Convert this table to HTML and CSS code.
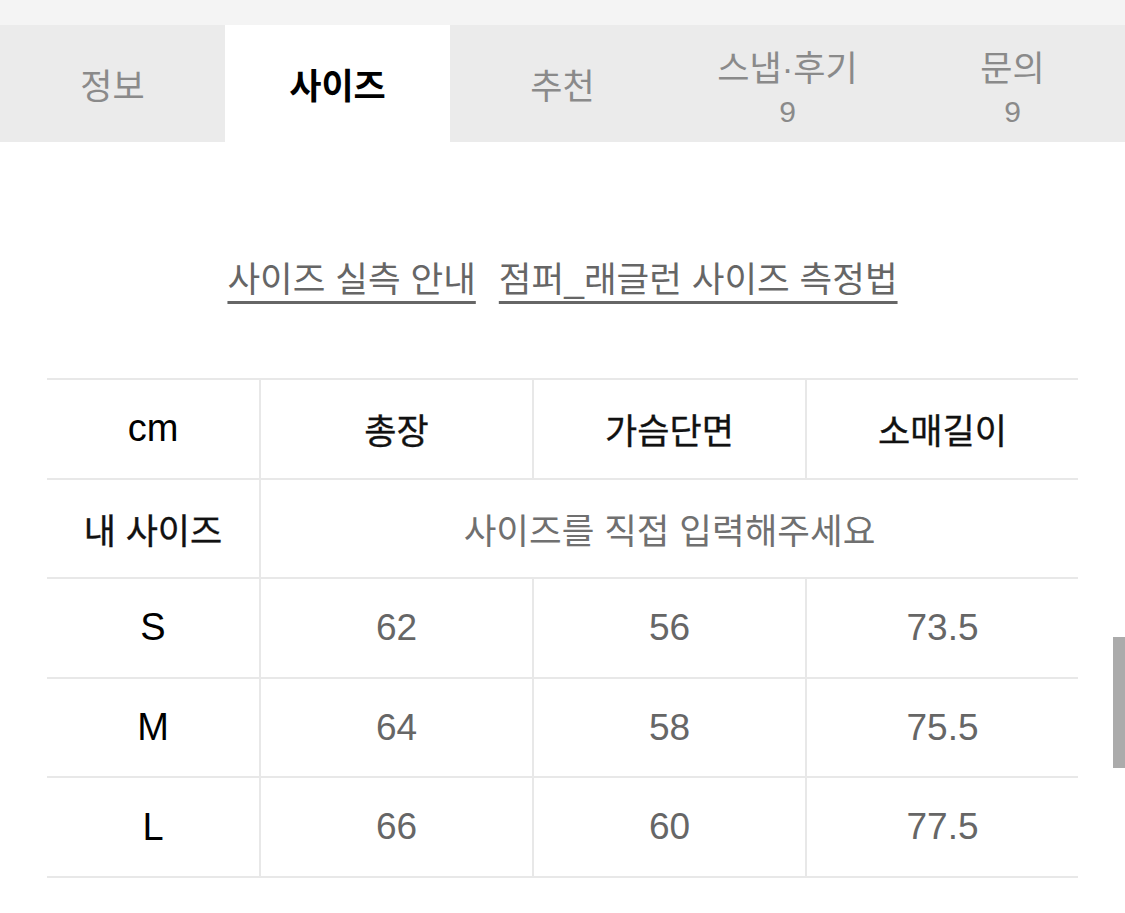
FILE: index.html
```html
<!DOCTYPE html>
<html lang="ko">
<head>
<meta charset="utf-8">
<title>사이즈</title>
<link rel="stylesheet" href="styles.css">
</head>
<body>
<div class="topstrip"></div>
<nav class="tabs">
  <div class="tab"><span class="tab-label">정보</span></div>
  <div class="tab active"><span class="tab-label">사이즈</span></div>
  <div class="tab"><span class="tab-label">추천</span></div>
  <div class="tab has-count"><span class="tab-label">스냅·후기</span><span class="tab-count">9</span></div>
  <div class="tab has-count"><span class="tab-label">문의</span><span class="tab-count">9</span></div>
</nav>
<section class="guide">
  <a class="guide-link">사이즈 실측 안내</a>
  <a class="guide-link">점퍼_래글런 사이즈 측정법</a>
</section>
<table class="size-table">
  <colgroup>
    <col class="c-first"><col class="c-mid"><col class="c-mid"><col class="c-last">
  </colgroup>
  <tr class="head">
    <td class="lat">cm</td>
    <td class="ko">총장</td>
    <td class="ko">가슴단면</td>
    <td class="ko">소매길이</td>
  </tr>
  <tr class="mine">
    <td class="ko">내 사이즈</td>
    <td colspan="3" class="hint">사이즈를 직접 입력해주세요</td>
  </tr>
  <tr>
    <td class="lat">S</td><td class="val">62</td><td class="val">56</td><td class="val">73.5</td>
  </tr>
  <tr>
    <td class="lat">M</td><td class="val">64</td><td class="val">58</td><td class="val">75.5</td>
  </tr>
  <tr>
    <td class="lat">L</td><td class="val">66</td><td class="val">60</td><td class="val">77.5</td>
  </tr>
</table>
<div class="scrollbar"></div>
</body>
</html>
```

FILE: styles.css
```css
html, body {
  margin: 0;
  padding: 0;
  background: #ffffff;
}
body {
  font-family: "Liberation Sans", "Noto Sans CJK KR", sans-serif;
  color: #000;
  width: 1125px;
  height: 913px;
  overflow: hidden;
  position: relative;
}
.topstrip {
  height: 25px;
  background: #f4f4f4;
}
.tabs {
  display: flex;
  height: 117px;
  background: #ebebeb;
}
.tab {
  flex: 1 1 0;
  display: flex;
  flex-direction: column;
  align-items: center;
  justify-content: center;
  padding-top: 6px;
  color: #8a8a8a;
}
.tab.active {
  background: #ffffff;
  color: #000;
  font-weight: 700;
}
.tab-label {
  font-size: 35px;
  line-height: 44px;
}
.tab.has-count {
  padding-top: 12px;
}
.tab-count {
  font-size: 30px;
  line-height: 42px;
}
.guide {
  padding-top: 113px;
  display: flex;
  justify-content: center;
  gap: 23px;
  line-height: 50px;
}
.guide-link {
  font-size: 35.5px;
  color: #666;
  text-decoration: underline;
  text-decoration-thickness: 3px;
  text-underline-offset: 9px;
  text-decoration-color: #666;
}
.size-table {
  margin: 73px 0 0 47px;
  width: 1031px;
  border-collapse: collapse;
  table-layout: fixed;
}
.c-first { width: 213px; }
.c-mid { width: 273px; }
.c-last { width: 272px; }
.size-table td {
  height: 97.6px;
  padding: 0;
  text-align: center;
  vertical-align: middle;
  border-top: 2px solid #e8e8e8;
  border-bottom: 2px solid #e8e8e8;
  border-left: 2px solid #e8e8e8;
  font-size: 35px;
  font-weight: 400;
  color: #000;
}
.size-table td:first-child {
  border-left: none;
}
.size-table td.ko {
  font-weight: 400;
  color: #111;
  -webkit-text-stroke: 0.35px #111;
}
.size-table td.lat {
  font-size: 38px;
  font-weight: 400;
  color: #000;
}
.size-table td.val {
  font-size: 37px;
  font-weight: 400;
  color: #666;
}
.size-table td.hint {
  font-size: 35.5px;
  font-weight: 400;
  color: #707070;
}
.scrollbar {
  position: absolute;
  right: 0;
  top: 637px;
  width: 12px;
  height: 131px;
  background: #ababab;
}
```
